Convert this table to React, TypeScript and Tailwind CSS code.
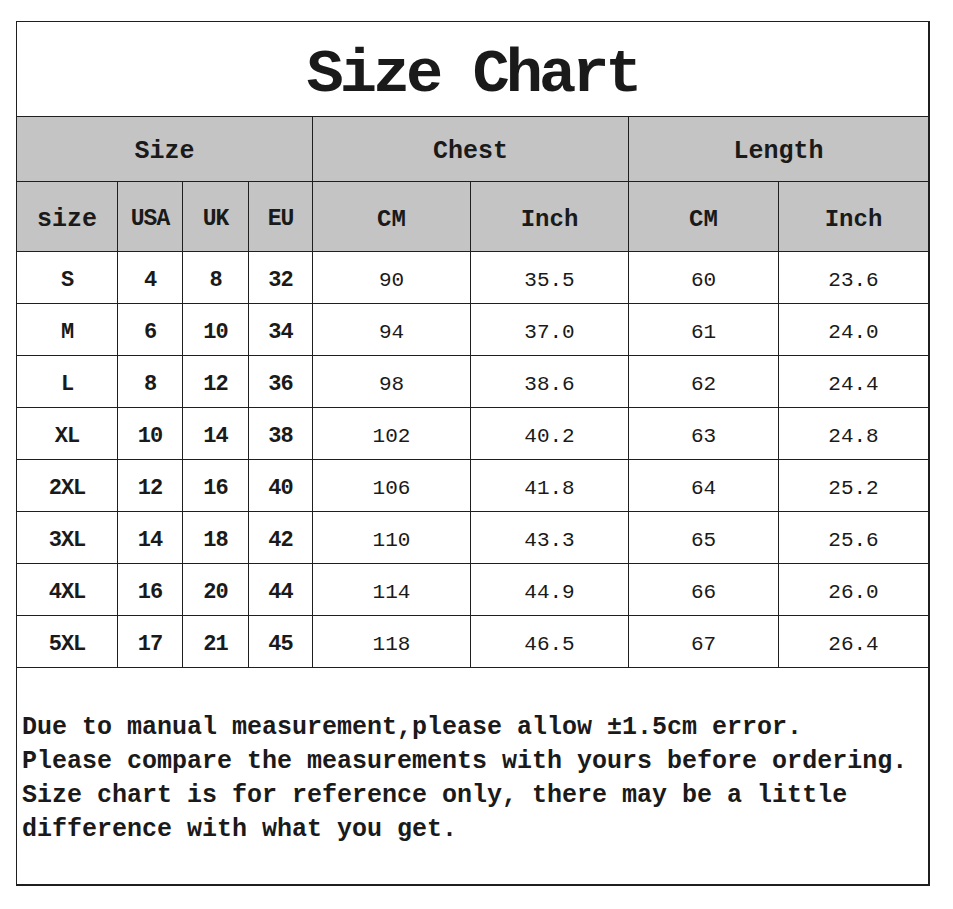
const rows = [
  ["S", "4", "8", "32", "90", "35.5", "60", "23.6"],
  ["M", "6", "10", "34", "94", "37.0", "61", "24.0"],
  ["L", "8", "12", "36", "98", "38.6", "62", "24.4"],
  ["XL", "10", "14", "38", "102", "40.2", "63", "24.8"],
  ["2XL", "12", "16", "40", "106", "41.8", "64", "25.2"],
  ["3XL", "14", "18", "42", "110", "43.3", "65", "25.6"],
  ["4XL", "16", "20", "44", "114", "44.9", "66", "26.0"],
  ["5XL", "17", "21", "45", "118", "46.5", "67", "26.4"],
]

const widths = [101, 65, 66, 64, 158, 158, 150, 150]

export default function App() {
  return (
    <div className="min-h-[909px] bg-white pt-[21px] pl-[16px] text-[#1a1a1a] [font-family:'Liberation_Mono',monospace]">
      <div className="w-[914px] border-r-2 border-b-2 border-[#1f1f1f]">
        <table className="table-fixed border-collapse w-[912px]">
          <colgroup>
            {widths.map((w, i) => (
              <col key={i} style={{ width: w }} />
            ))}
          </colgroup>
          <tbody>
            {/* Title */}
            <tr>
              <td colSpan={8} className="h-[95px] pt-[12px] border border-[#1f1f1f] text-center align-middle">
                <span className="text-[62px] font-bold tracking-[-4px] leading-none">Size Chart</span>
              </td>
            </tr>

            {/* Group headers */}
            <tr className="bg-[#c4c4c4]">
              <td colSpan={4} className="h-[65px] pt-[6px] border border-[#1f1f1f] text-center text-[25px] font-bold">Size</td>
              <td colSpan={2} className="pt-[6px] border border-[#1f1f1f] text-center text-[25px] font-bold">Chest</td>
              <td colSpan={2} className="pt-[6px] border border-[#1f1f1f] text-center text-[25px] font-bold">Length</td>
            </tr>

            {/* Sub headers */}
            <tr className="bg-[#c4c4c4]">
              <td className="h-[70px] pt-[6px] border border-[#1f1f1f] text-center text-[25px] font-bold">size</td>
              <td className="pt-[6px] border border-[#1f1f1f] text-center text-[23px] font-bold tracking-[-1px]">USA</td>
              <td className="pt-[6px] border border-[#1f1f1f] text-center text-[23px] font-bold tracking-[-1px]">UK</td>
              <td className="pt-[6px] border border-[#1f1f1f] text-center text-[23px] font-bold tracking-[-1px]">EU</td>
              <td className="pt-[6px] border border-[#1f1f1f] text-center text-[24px] font-bold">CM</td>
              <td className="pt-[6px] border border-[#1f1f1f] text-center text-[24px] font-bold">Inch</td>
              <td className="pt-[6px] border border-[#1f1f1f] text-center text-[24px] font-bold">CM</td>
              <td className="pt-[6px] border border-[#1f1f1f] text-center text-[24px] font-bold">Inch</td>
            </tr>

            {rows.map((r) => (
              <tr key={r[0]}>
                {r.map((v, i) => (
                  <td
                    key={i}
                    className={
                      i < 4
                        ? "h-[52px] pt-[6px] border border-[#1f1f1f] text-center text-[22px] font-bold tracking-[-1px]"
                        : "h-[52px] pt-[6px] border border-[#1f1f1f] text-center text-[21px]"
                    }
                  >
                    {v}
                  </td>
                ))}
              </tr>
            ))}
          </tbody>
        </table>

        {/* Note */}
        <div className="w-[912px] border-l border-[#1f1f1f] pt-[43px] pb-[37px] pl-[5px] text-[25px] font-bold leading-[34px] whitespace-pre">
          <p>Due to manual measurement,please allow ±1.5cm error.</p>
          <p>Please compare the measurements with yours before ordering.</p>
          <p>Size chart is for reference only, there may be a little</p>
          <p>difference with what you get.</p>
        </div>
      </div>
    </div>
  )
}
